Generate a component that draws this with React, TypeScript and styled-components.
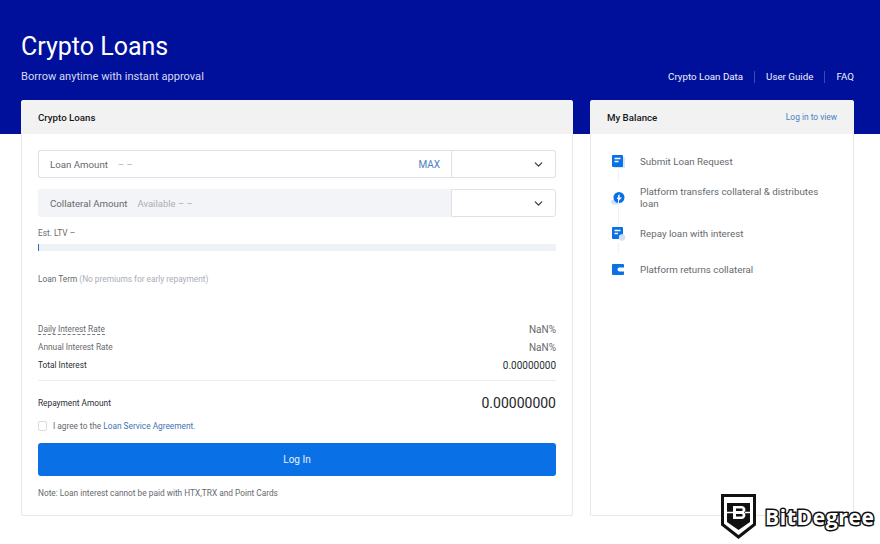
import React from "react";
import styled, { createGlobalStyle } from "styled-components";
import { ChevronDown } from "lucide-react";

const GlobalStyle = createGlobalStyle`
  html, body {
    margin: 0;
    background: #fff;
    font-family: Roboto, "Liberation Sans", sans-serif;
    -webkit-font-smoothing: antialiased;
  }
  * { box-sizing: border-box; }
`;

const Page = styled.div`
  position: relative;
  width: 880px;
  height: 544px;
  overflow: hidden;
  background: #fff;
`;

const Hero = styled.header`
  height: 134px;
  background: #00109b;
  padding: 33px 26px 0 21px;
  display: flex;
  justify-content: space-between;
  color: #fff;
`;

const HeroTitle = styled.h1`
  margin: 0;
  font-size: 25px;
  line-height: 28px;
  font-weight: 400;
`;

const HeroSub = styled.p`
  margin: 9px 0 0;
  font-size: 11.1px;
  line-height: 14px;
  color: #d6daf3;
`;

const HeroNav = styled.nav`
  display: flex;
  align-items: center;
  height: 12px;
  margin-top: 38px;
`;

const HeroLink = styled.a`
  font-size: 9.75px;
  line-height: 12px;
  color: #f0f2ff;
  padding: 0 11px;
  border-left: 1px solid #3c4bb4;
  &:first-child { border-left: none; }
  &:last-child { padding-right: 0; }
`;

const Main = styled.main`
  display: flex;
  align-items: flex-start;
  gap: 17px;
  margin: -34px 26px 0 21px;
`;

const Card = styled.section<{ $width: number }>`
  width: ${(p) => p.$width}px;
  height: 416px;
  background: #fff;
  border: 1px solid #e6e8ec;
  border-top: none;
  border-radius: 3px 3px 2px 2px;
  flex: none;
`;

const CardHead = styled.div`
  height: 34px;
  margin: 0 -1px;
  background: #f2f2f2;
  border-radius: 3px 3px 0 0;
  padding: 0 17px;
  display: flex;
  align-items: center;
  justify-content: space-between;
`;

const CardTitle = styled.h2`
  margin: 0;
  font-size: 9.7px;
  font-weight: 500;
  color: #14171c;
`;

const ViewLink = styled.a`
  font-size: 8.4px;
  color: #4c7fbf;
`;

const FormBody = styled.div`
  padding: 16px 16px 0;
`;

const FieldRow = styled.div`
  display: flex;
  height: 28px;
  margin-bottom: 11px;
`;

const AmountBox = styled.div<{ $muted?: boolean }>`
  flex: 1;
  display: flex;
  align-items: center;
  padding: 0 11px;
  font-size: 9.7px;
  color: #66696e;
  border-radius: 3px 0 0 3px;
  background: ${(p) => (p.$muted ? "#f2f4f7" : "#fff")};
  border: 1px solid ${(p) => (p.$muted ? "#f2f4f7" : "#dfe1e5")};
  border-right: none;
`;

const Hint = styled.span`
  margin-left: 10px;
  color: #a9aeb6;
  font-size: 9.5px;
`;

const Max = styled.span`
  margin-left: auto;
  color: #4c7fbf;
  font-size: 10px;
`;

const CoinSelect = styled.div`
  width: 105px;
  flex: none;
  display: flex;
  align-items: center;
  justify-content: flex-end;
  padding-right: 10px;
  background: #fff;
  color: #33373d;
  border: 1px solid #dfe1e5;
  border-radius: 0 3px 3px 0;
`;

const LtvLabel = styled.div`
  margin-top: 11px;
  font-size: 8.3px;
  line-height: 10px;
  color: #66696e;
`;

const LtvTrack = styled.div`
  height: 7px;
  margin-top: 6px;
  background: #eef2f7;
  border-left: 1px solid #2b6fb8;
`;

const TermLine = styled.div`
  margin-top: 23px;
  font-size: 8.3px;
  line-height: 10px;
  color: #66696e;
`;

const TermNote = styled.span`
  color: #a9aeb6;
`;

const Rates = styled.div`
  margin-top: 36px;
  padding-bottom: 6px;
  border-bottom: 1px solid #eceef1;
`;

const RateRow = styled.div<{ $strong?: boolean }>`
  display: flex;
  justify-content: space-between;
  align-items: center;
  height: 18px;
  font-size: 8.3px;
  color: ${(p) => (p.$strong ? "#2b2f35" : "#66696e")};
`;

const RateValue = styled.span<{ $strong?: boolean }>`
  font-size: 10px;
  color: ${(p) => (p.$strong ? "#2b2f35" : "#66696e")};
`;

const Dotted = styled.span`
  border-bottom: 1px dashed #777c84;
  line-height: 10px;
`;

const RepayRow = styled.div`
  display: flex;
  justify-content: space-between;
  align-items: center;
  height: 18px;
  margin-top: 13px;
  font-size: 8.3px;
  color: #2b2f35;
`;

const RepayValue = styled.span`
  font-size: 14px;
  color: #23262b;
`;

const AgreeRow = styled.div`
  display: flex;
  align-items: center;
  height: 12px;
  margin-top: 8px;
  gap: 6px;
  font-size: 8.3px;
  color: #66696e;
`;

const Check = styled.span`
  width: 9px;
  height: 10px;
  border: 1px solid #d9dce0;
  border-radius: 2px;
`;

const AgreeLink = styled.a`
  color: #3d74b4;
`;

const LoginButton = styled.button`
  display: block;
  width: 100%;
  height: 33px;
  margin-top: 11px;
  border: none;
  border-radius: 3px;
  background: #0970e6;
  color: #e8f2ff;
  font: 400 10px Roboto, sans-serif;
`;

const Note = styled.p`
  margin: 12px 0 0;
  font-size: 8.3px;
  line-height: 10px;
  color: #66696e;
`;

const Steps = styled.ol`
  list-style: none;
  margin: 0;
  padding: 15px 16px 0 21px;
`;

const Step = styled.li<{ $height: number }>`
  position: relative;
  display: flex;
  align-items: center;
  gap: 15px;
  height: ${(p) => p.$height}px;
  font-size: 9.75px;
  line-height: 12px;
  color: #66696e;
  &:not(:last-child)::after {
    content: "";
    position: absolute;
    left: 6px;
    top: 21px;
    bottom: -7px;
    width: 1px;
    background: #eef1f5;
  }
`;

const StepIcon = styled.svg`
  flex: none;
  width: 13px;
  height: 14px;
  overflow: visible;
`;

const Badge = styled.div`
  position: absolute;
  left: 721px;
  top: 494px;
  display: flex;
  align-items: center;
  gap: 9px;
`;

const BadgeText = styled.span`
  font: 700 21px "Open Sans", "Liberation Sans", sans-serif;
  letter-spacing: 0.65px;
  color: #fff;
  -webkit-text-stroke: 3px #111;
  paint-order: stroke fill;
`;

const icons = [
  <>
    <rect x="2" y="2" width="11" height="11" fill="#d7e7fb" />
    <rect width="11" height="12" rx="1" fill="#0970e6" />
    <path d="M2.5 3.5h6M2.5 6.5h4" stroke="#fff" strokeWidth="1.3" />
  </>,
  <>
    <ellipse cx="3.5" cy="11" rx="4.5" ry="2.8" fill="#cfe2fa" />
    <circle cx="7" cy="6.5" r="5.5" fill="#0970e6" />
    <path d="M7.5 3L4.8 8h2.2l-1 2.6L10 6.5H7.6z" fill="#fff" />
  </>,
  <>
    <rect width="11" height="12" rx="1" fill="#0970e6" />
    <path d="M2.5 3.5h6M2.5 6.5h3.5" stroke="#fff" strokeWidth="1.3" />
    <circle cx="10" cy="10.5" r="3.2" fill="#cfe2fa" />
  </>,
  <>
    <rect y="1" width="12" height="11" rx="1" fill="#0970e6" />
    <path d="M12 4.5H7.5a2 2 0 0 0 0 4H12z" fill="#fff" />
  </>,
];

const stepItems = [
  { label: "Submit Loan Request", height: 25 },
  { label: "Platform transfers collateral & distributes loan", height: 48 },
  { label: "Repay loan with interest", height: 24 },
  { label: "Platform returns collateral", height: 48 },
];

export default function App() {
  return (
    <Page>
      <GlobalStyle />
      <Hero>
        <div>
          <HeroTitle>Crypto Loans</HeroTitle>
          <HeroSub>Borrow anytime with instant approval</HeroSub>
        </div>
        <HeroNav>
          <HeroLink>Crypto Loan Data</HeroLink>
          <HeroLink>User Guide</HeroLink>
          <HeroLink>FAQ</HeroLink>
        </HeroNav>
      </Hero>
      <Main>
        <Card $width={552}>
          <CardHead>
            <CardTitle>Crypto Loans</CardTitle>
          </CardHead>
          <FormBody>
            <FieldRow>
              <AmountBox>
                Loan Amount<Hint>– –</Hint>
                <Max>MAX</Max>
              </AmountBox>
              <CoinSelect>
                <ChevronDown size={13} strokeWidth={2.2} />
              </CoinSelect>
            </FieldRow>
            <FieldRow>
              <AmountBox $muted>
                Collateral Amount<Hint>Available – –</Hint>
              </AmountBox>
              <CoinSelect>
                <ChevronDown size={13} strokeWidth={2.2} />
              </CoinSelect>
            </FieldRow>
            <LtvLabel>Est. LTV –</LtvLabel>
            <LtvTrack />
            <TermLine>
              Loan Term <TermNote>(No premiums for early repayment)</TermNote>
            </TermLine>
            <Rates>
              <RateRow>
                <Dotted>Daily Interest Rate</Dotted>
                <RateValue>NaN%</RateValue>
              </RateRow>
              <RateRow>
                Annual Interest Rate
                <RateValue>NaN%</RateValue>
              </RateRow>
              <RateRow $strong>
                Total Interest
                <RateValue $strong>0.00000000</RateValue>
              </RateRow>
            </Rates>
            <RepayRow>
              Repayment Amount
              <RepayValue>0.00000000</RepayValue>
            </RepayRow>
            <AgreeRow>
              <Check />
              <span>
                I agree to the <AgreeLink>Loan Service Agreement.</AgreeLink>
              </span>
            </AgreeRow>
            <LoginButton>Log In</LoginButton>
            <Note>Note: Loan interest cannot be paid with HTX,TRX and Point Cards</Note>
          </FormBody>
        </Card>
        <Card $width={264}>
          <CardHead>
            <CardTitle>My Balance</CardTitle>
            <ViewLink>Log in to view</ViewLink>
          </CardHead>
          <Steps>
            {stepItems.map((s, i) => (
              <Step key={s.label} $height={s.height}>
                <StepIcon viewBox="0 0 13 14">{icons[i]}</StepIcon>
                <span>{s.label}</span>
              </Step>
            ))}
          </Steps>
        </Card>
      </Main>
      <Badge>
        <svg width="35" height="45" viewBox="0 0 35 45">
          <path d="M1.5 1.5h32v29L17.5 43 1.5 30.5z" fill="#fff" stroke="#111" strokeWidth="3" />
          <path d="M6 9h23v19L17.5 36 6 28z" fill="#111" />
          <path
            d="M12 12h9a3.5 3.5 0 0 1 2 6.3 3.8 3.8 0 0 1-2 6.7H12zM15 14.6v2.4h5.5a1.2 1.2 0 0 0 0-2.4zM15 20v2.4h5.5a1.2 1.2 0 0 0 0-2.4z"
            fill="#fff"
            fillRule="evenodd"
          />
          <path d="M6 18.5h6M24 18.5h5" stroke="#fff" strokeWidth="1.6" />
        </svg>
        <BadgeText>BitDegree</BadgeText>
      </Badge>
    </Page>
  );
}
